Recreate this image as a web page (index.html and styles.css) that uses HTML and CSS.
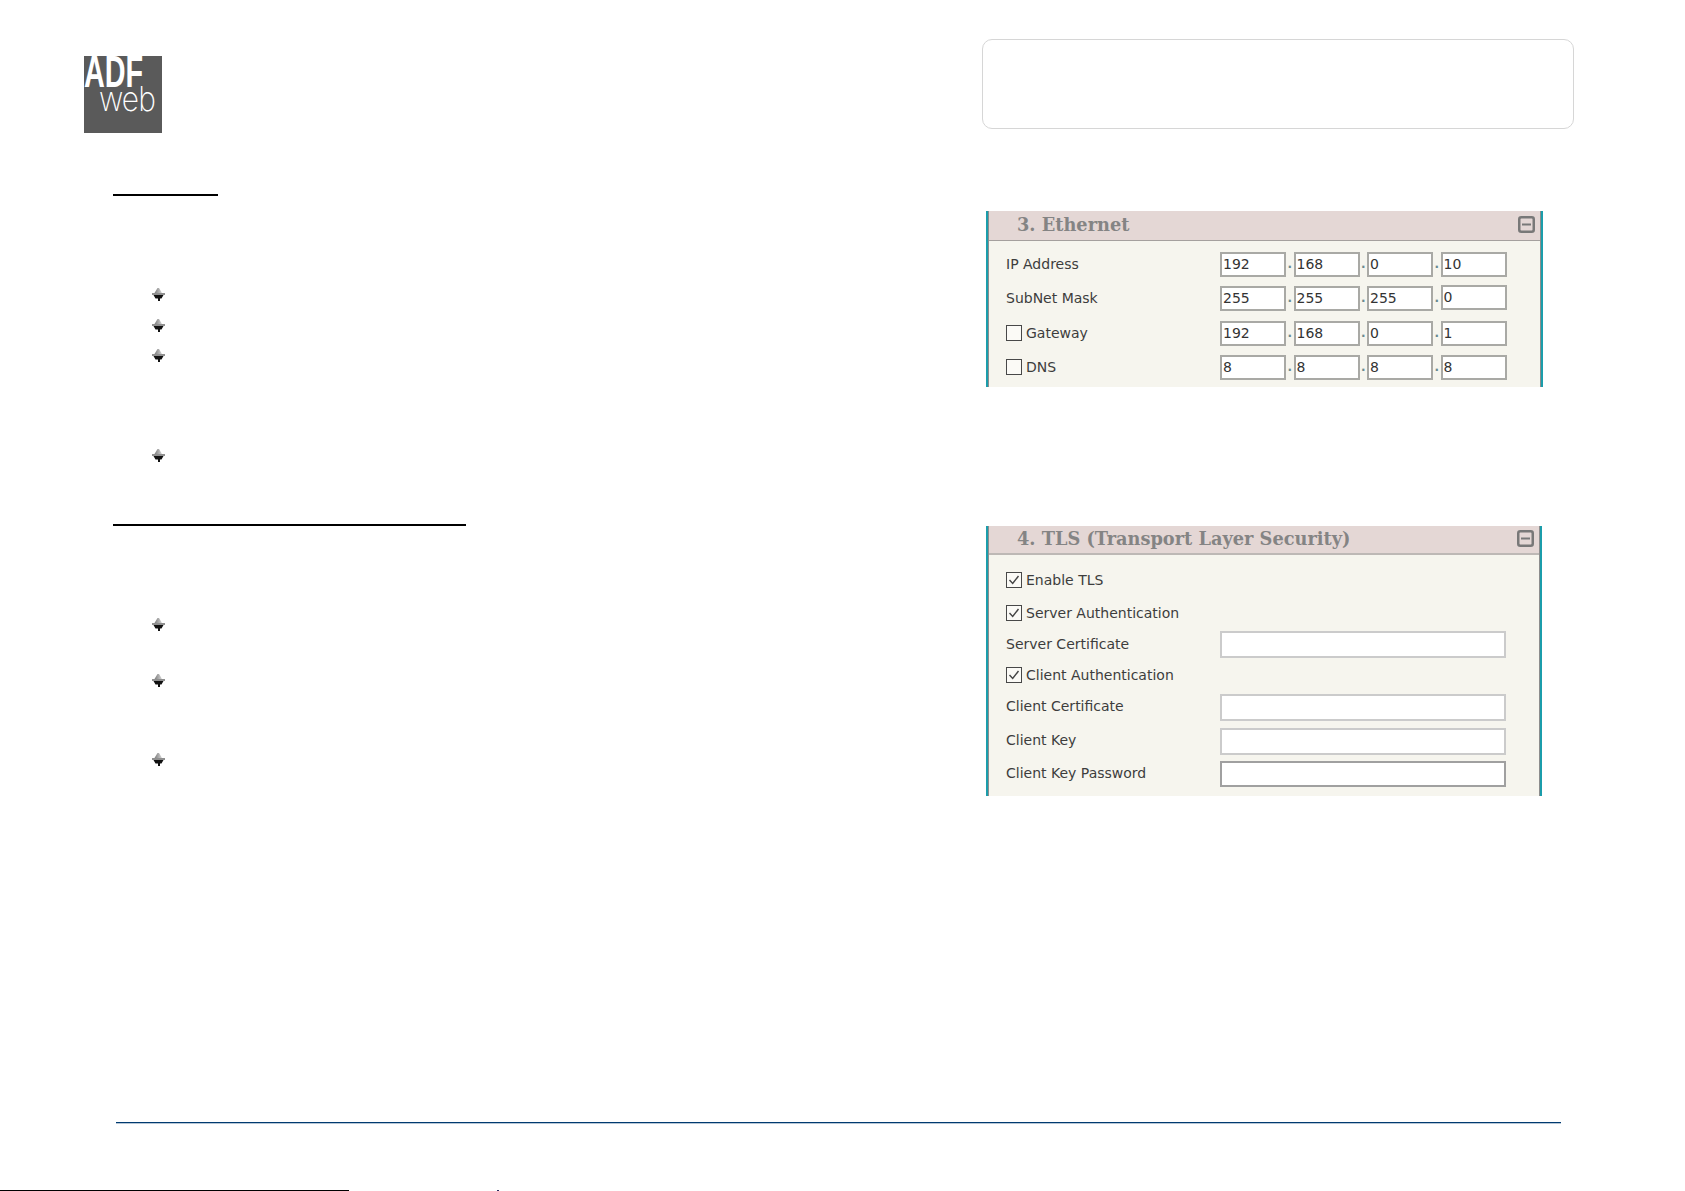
FILE: index.html
```html
<!DOCTYPE html>
<html lang="en">
<head>
<meta charset="utf-8">
<title>ADFweb</title>
<link rel="stylesheet" href="styles.css">
</head>
<body>
<svg class="defs" width="0" height="0" aria-hidden="true">
  <defs>
    <linearGradient id="topfade" x1="0" x2="1" y1="0" y2="0"><stop offset="0" stop-color="#7c7c7c"/><stop offset="1" stop-color="#d4d4d4"/></linearGradient>
    <symbol id="bullet" viewBox="0 0 13 13">
      <path d="M5.500 0H7l3 5H2.500z" fill="url(#topfade)"/>
      <path d="M0 5h13v2H0z" fill="#8f8f8f"/>
      <path d="M1.500 7h10L9.500 10.500H8V13H6v-2.500H3.500z" fill="#111"/>
    </symbol>
    <symbol id="minus" viewBox="0 0 17 17">
      <rect x="1.250" y="1.250" width="14.500" height="14.500" rx="2" fill="none" stroke="#787878" stroke-width="2.500"/>
      <path d="M4 8.500h9" stroke="#787878" stroke-width="2"/>
    </symbol>
    <symbol id="check" viewBox="0 0 16 16">
      <path d="M3.500 8l3.200 3.500L12.500 4" fill="none" stroke="#444" stroke-width="1.400"/>
    </symbol>
  </defs>
</svg>
<div class="page">
  <header class="top">
    <div class="logo">
      <span class="logo-adf">ADF</span>
      <span class="logo-web">web</span>
    </div>
    <div class="notes"></div>
  </header>

  <main class="main">
    <section class="left">
      <div class="heading heading--short"></div>
      <svg class="bullet bullet--first"><use href="#bullet"/></svg>
      <svg class="bullet bullet--g18"><use href="#bullet"/></svg>
      <svg class="bullet bullet--g17"><use href="#bullet"/></svg>
      <svg class="bullet bullet--g87"><use href="#bullet"/></svg>
      <div class="heading heading--long"></div>
      <svg class="bullet bullet--g92"><use href="#bullet"/></svg>
      <svg class="bullet bullet--g43"><use href="#bullet"/></svg>
      <svg class="bullet bullet--g66"><use href="#bullet"/></svg>
    </section>

    <section class="right">
      <div class="panel panel--eth">
        <div class="panel-inner">
          <div class="panel-head">
            <h2 class="panel-title">3. Ethernet</h2>
            <svg class="minus"><use href="#minus"/></svg>
          </div>
          <div class="panel-body panel-body--eth">
            <div class="row">
              <div class="label">IP Address</div>
              <div class="ip"><div class="field">192</div><span class="dot">.</span><div class="field">168</div><span class="dot">.</span><div class="field">0</div><span class="dot">.</span><div class="field">10</div></div>
            </div>
            <div class="row row--g9">
              <div class="label">SubNet Mask</div>
              <div class="ip"><div class="field">255</div><span class="dot">.</span><div class="field">255</div><span class="dot">.</span><div class="field">255</div><span class="dot">.</span><div class="field field--raised">0</div></div>
            </div>
            <div class="row row--g10">
              <div class="label"><span class="box"></span>Gateway</div>
              <div class="ip"><div class="field">192</div><span class="dot">.</span><div class="field">168</div><span class="dot">.</span><div class="field">0</div><span class="dot">.</span><div class="field">1</div></div>
            </div>
            <div class="row row--g9">
              <div class="label"><span class="box"></span>DNS</div>
              <div class="ip"><div class="field">8</div><span class="dot">.</span><div class="field">8</div><span class="dot">.</span><div class="field">8</div><span class="dot">.</span><div class="field">8</div></div>
            </div>
          </div>
        </div>
      </div>

      <div class="panel panel--tls">
        <div class="panel-inner">
          <div class="panel-head panel-head--tls">
            <h2 class="panel-title">4. TLS (Transport Layer Security)</h2>
            <svg class="minus"><use href="#minus"/></svg>
          </div>
          <div class="panel-body panel-body--tls">
            <div class="row row--check">
              <div class="label"><span class="box"><svg class="tick"><use href="#check"/></svg></span>Enable TLS</div>
            </div>
            <div class="row row--check row--g17">
              <div class="label"><span class="box"><svg class="tick"><use href="#check"/></svg></span>Server Authentication</div>
            </div>
            <div class="row row--wide row--g10">
              <div class="label">Server Certificate</div>
              <div class="wide"></div>
            </div>
            <div class="row row--check row--g9">
              <div class="label"><span class="box"><svg class="tick"><use href="#check"/></svg></span>Client Authentication</div>
            </div>
            <div class="row row--wide row--g11">
              <div class="label label--up">Client Certificate</div>
              <div class="wide"></div>
            </div>
            <div class="row row--wide row--g7">
              <div class="label label--up">Client Key</div>
              <div class="wide"></div>
            </div>
            <div class="row row--g6">
              <div class="label label--up">Client Key Password</div>
              <div class="wide wide--dark"></div>
            </div>
          </div>
        </div>
      </div>
    </section>
  </main>

  <footer class="foot">
    <div class="foot-rule"></div>
    <div class="foot-edge">
      <div class="edge-line"></div>
      <div class="edge-mark"></div>
    </div>
  </footer>
</div>
</body>
</html>
```
FILE: styles.css
```css
* { box-sizing: border-box; }
html, body { margin: 0; padding: 0; background: #fff; }
.defs { position: absolute; }
.page {
  width: 1685px;
  height: 1191px;
  display: flex;
  flex-direction: column;
  overflow: hidden;
  font-family: "DejaVu Sans", Verdana, sans-serif;
  font-size: 14px;
  color: #3d3d3d;
}

/* header */
.top {
  display: flex;
  padding: 39px 111px 0 84px;
  justify-content: space-between;
  align-items: flex-start;
}
.logo {
  position: relative;
  width: 78px;
  height: 77px;
  margin-top: 17px;
  background: #5a5a5a;
  font-family: "Liberation Sans", Arial, sans-serif;
  color: #fff;
}
.logo-adf {
  position: absolute;
  left: 0;
  top: 0;
  font-size: 45px;
  line-height: 32px;
  font-weight: 700;
  transform: scaleX(0.64);
  transform-origin: 0 0;
}
.logo-web {
  position: absolute;
  left: 15px;
  top: 32px;
  font-family: Inter, "Liberation Sans", sans-serif;
  font-size: 34px;
  line-height: 22px;
  font-weight: 200;
  letter-spacing: -1px;
  transform: scaleX(0.88);
  transform-origin: 0 0;
}
.notes {
  width: 592px;
  height: 90px;
  border: 1px solid #d6d6d6;
  border-radius: 10px;
}

/* main */
.main {
  display: flex;
  padding: 61px 0 0 113px;
}
.left {
  width: 873px;
  display: flex;
  flex-direction: column;
  align-items: flex-start;
}
.heading { height: 2px; background: #000; }
.heading--short { width: 105px; }
.heading--long { width: 353px; margin-top: 62px; }
.bullet { width: 13px; height: 13px; margin-left: 39px; display: block; }
.bullet--first { margin-top: 92px; }
.bullet--g18 { margin-top: 18px; }
.bullet--g17 { margin-top: 17px; }
.bullet--g87 { margin-top: 87px; }
.bullet--g92 { margin-top: 92px; }
.bullet--g43 { margin-top: 43px; }
.bullet--g66 { margin-top: 66px; }

/* panels */
.right { display: flex; flex-direction: column; }
.panel {
  border-left: 2px solid #1b9dab;
  border-right: 2px solid #1b9dab;
}
.panel--eth { width: 557px; margin-top: 17px; }
.panel--tls { width: 556px; margin-top: 139px; }
.panel-inner {
  border-left: 1px solid #8d8d8d;
  border-right: 1px solid #8d8d8d;
  background: #f6f5ee;
}
.panel-head {
  height: 30px;
  display: flex;
  align-items: center;
  justify-content: space-between;
  padding: 0 5px 2px 28px;
  background: #e4d7d5;
  border-bottom: 1px solid #a5a09e;
}
.panel-head--tls {
  height: 29px;
  border-bottom: 2px solid #bdb8b5;
}
.panel-title {
  margin: 0;
  font-family: "DejaVu Serif", Georgia, serif;
  font-size: 17.750px;
  font-weight: 700;
  color: #848484;
}
.minus { width: 17px; height: 17px; display: block; }
.panel-body--eth { padding: 11px 0 7px 17px; }
.panel-body--tls { padding: 17px 0 9px 17px; }
.row {
  display: flex;
  align-items: center;
  height: 25px;
}
.row--check { height: 16px; }
.row--wide { height: 27px; }
.row--g6 { margin-top: 6px; height: 26px; }
.row--g7 { margin-top: 7px; }
.row--g9 { margin-top: 9px; }
.row--g10 { margin-top: 10px; }
.row--g11 { margin-top: 11px; }
.row--g17 { margin-top: 17px; }
.label {
  width: 214px;
  margin-top: -1px;
  display: flex;
  align-items: center;
  gap: 4px;
  white-space: nowrap;
}
.label--up { margin-top: -3px; }
.box {
  width: 16px;
  height: 16px;
  flex: none;
  border: 1px solid #484848;
  background: #fbfaf6;
  position: relative;
}
.tick { position: absolute; left: -1px; top: -1px; width: 16px; height: 16px; display: block; }
.ip { display: flex; align-items: center; }
.field {
  width: 66px;
  height: 25px;
  line-height: 20px;
  padding-left: 1px;
  background: #fff;
  border: 2px solid #a9a9a5;
  color: #333;
}
.field--raised { margin-top: -3px; }
.dot {
  width: 7.500px;
  text-align: center;
  font-weight: 700;
  color: #6a8a90;
  font-size: 12px;
  line-height: 25px;
}
.wide {
  width: 286px;
  height: 27px;
  background: #fff;
  border: 2px solid #cbcbcb;
}
.wide--dark {
  height: 26px;
  border-color: #a0a0a0;
}

/* footer */
.foot {
  margin-top: auto;
  display: flex;
  flex-direction: column;
}
.foot-rule {
  height: 1px;
  margin: 0 124px 0 116px;
  background: #003a70;
  box-shadow: 0 1px 0 #b5c6d6;
}
.foot-edge {
  display: flex;
  margin-top: 67px;
  height: 1px;
}
.edge-line { width: 349px; background: #000; }
.edge-mark { width: 2px; margin-left: 148px; background: #2a2a60; }
```
